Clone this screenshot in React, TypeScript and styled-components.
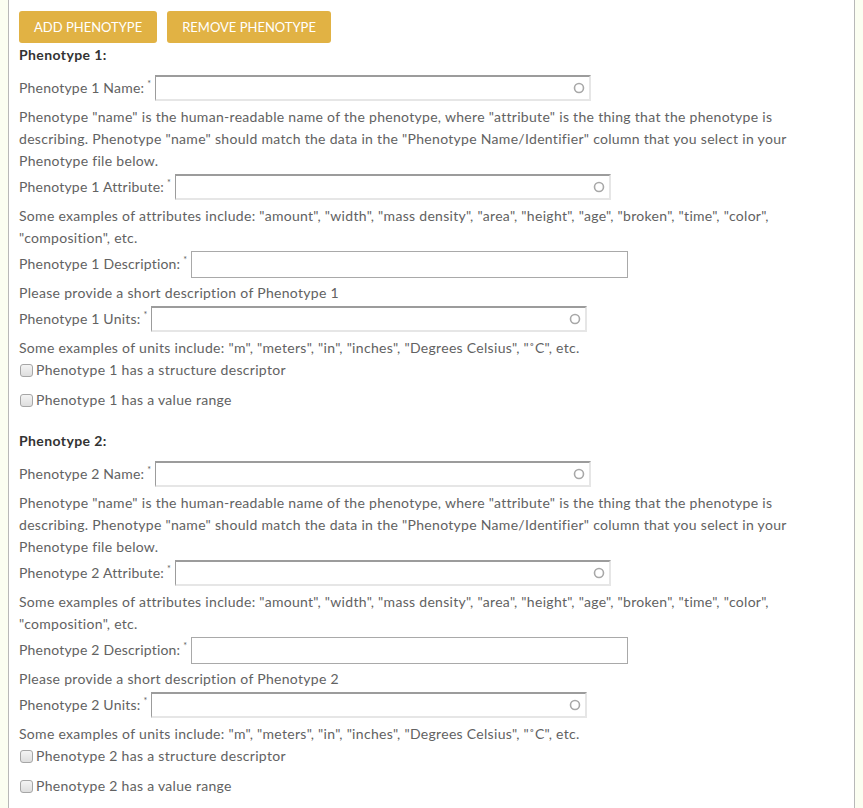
import React from "react";
import styled, { createGlobalStyle } from "styled-components";

const GlobalStyle = createGlobalStyle`
  html, body { margin: 0; padding: 0; }
  body {
    background: #fbfef1;
    font-family: Lato, "Open Sans", sans-serif;
    padding: 0 8px;
  }
`;

const Panel = styled.div`
  background: #fff;
  border-left: 1px solid #b8b8b8;
  border-right: 1px solid #b8b8b8;
  padding: 11px 10px 20px 10px;
  min-height: 808px;
  box-sizing: border-box;
  color: #626262;
  font-size: 14px;
`;

const ButtonBar = styled.div`
  display: flex;
  gap: 10px;
`;

const ActionButton = styled.button`
  background: #e1b244;
  color: #fff;
  border: none;
  border-radius: 3px;
  height: 32px;
  padding: 0 15px;
  font-family: Lato, "Open Sans", sans-serif;
  font-size: 13px;
  text-transform: uppercase;
  cursor: pointer;
`;

const Section = styled.div<{ $first?: boolean }>`
  display: flex;
  flex-direction: column;
  margin-top: ${(p) => (p.$first ? "0" : "10px")};
`;

const Heading = styled.div`
  font-weight: bold;
  color: #333;
  line-height: 20px;
  letter-spacing: 0.4px;
  margin: 2px 0 8px;
`;

const FieldRow = styled.div`
  display: flex;
  align-items: center;
  height: 26px;
  margin: 2px 0 5px;
`;

const Label = styled.label`
  line-height: 22px;
  margin-right: 4px;
  white-space: nowrap;
  letter-spacing: 0.2px;
`;

const Req = styled.sup`
  font-size: 9px;
  vertical-align: top;
  line-height: 14px;
  margin-left: 3px;
`;

const AutoInputWrap = styled.div`
  position: relative;
  width: 436px;
  height: 26px;
  box-sizing: border-box;
  border-top: 2px solid #9c9c9c;
  border-left: 1px solid #9c9c9c;
  border-right: 2px solid #e6e6e6;
  border-bottom: 2px solid #e6e6e6;
  background: #fff;
`;

const AutoInput = styled.input`
  width: 100%;
  height: 100%;
  box-sizing: border-box;
  border: none;
  outline: none;
  padding: 0 24px 0 4px;
  font-family: inherit;
  font-size: 14px;
  background: transparent;
`;

const Spinner = styled.svg`
  position: absolute;
  right: 4px;
  top: 50%;
  transform: translateY(-50%);
`;

const PlainInput = styled.input`
  width: 437px;
  height: 27px;
  box-sizing: border-box;
  border: 1px solid #a9a9a9;
  padding: 0 4px;
  font-family: inherit;
  font-size: 14px;
  outline: none;
`;

const Help = styled.div`
  line-height: 22px;
  letter-spacing: 0.3px;
`;

const CheckRow = styled.label`
  display: flex;
  align-items: center;
  line-height: 22px;
  letter-spacing: 0.3px;
  margin-bottom: 8px;
`;

const Check = styled.input`
  appearance: none;
  -webkit-appearance: none;
  box-sizing: border-box;
  margin: 0 3px 0 1px;
  width: 13px;
  height: 13px;
  border: 1px solid #a6a6a6;
  border-radius: 3px;
  background: linear-gradient(#f4f4f4, #dedede);
`;

function AutoField({ label }: { label: string }) {
  return (
    <FieldRow>
      <Label>
        {label}
        <Req>*</Req>
      </Label>
      <AutoInputWrap>
        <AutoInput type="text" />
        <Spinner width="12" height="12" viewBox="0 0 12 12">
          <circle cx="6" cy="6" r="4.5" fill="none" stroke="#a8a8a8" strokeWidth="1.6" />
        </Spinner>
      </AutoInputWrap>
    </FieldRow>
  );
}

function PhenotypeBlock({ n, first }: { n: number; first?: boolean }) {
  return (
    <Section $first={first}>
      <Heading>Phenotype {n}:</Heading>
      <AutoField label={`Phenotype ${n} Name:`} />
      <Help>
        Phenotype "name" is the human-readable name of the phenotype, where "attribute" is the thing that the phenotype is
        <br />
        describing. Phenotype "name" should match the data in the "Phenotype Name/Identifier" column that you select in your
        <br />
        Phenotype file below.
      </Help>
      <AutoField label={`Phenotype ${n} Attribute:`} />
      <Help>
        Some examples of attributes include: "amount", "width", "mass density", "area", "height", "age", "broken", "time", "color",
        <br />
        "composition", etc.
      </Help>
      <FieldRow>
        <Label>
          Phenotype {n} Description:
          <Req>*</Req>
        </Label>
        <PlainInput type="text" />
      </FieldRow>
      <Help>Please provide a short description of Phenotype {n}</Help>
      <AutoField label={`Phenotype ${n} Units:`} />
      <Help>Some examples of units include: "m", "meters", "in", "inches", "Degrees Celsius", "˚C", etc.</Help>
      <CheckRow>
        <Check type="checkbox" />
        Phenotype {n} has a structure descriptor
      </CheckRow>
      <CheckRow>
        <Check type="checkbox" />
        Phenotype {n} has a value range
      </CheckRow>
    </Section>
  );
}

export default function App() {
  return (
    <>
      <GlobalStyle />
      <Panel>
        <ButtonBar>
          <ActionButton>Add Phenotype</ActionButton>
          <ActionButton>Remove Phenotype</ActionButton>
        </ButtonBar>
        <PhenotypeBlock n={1} first />
        <PhenotypeBlock n={2} />
      </Panel>
    </>
  );
}
